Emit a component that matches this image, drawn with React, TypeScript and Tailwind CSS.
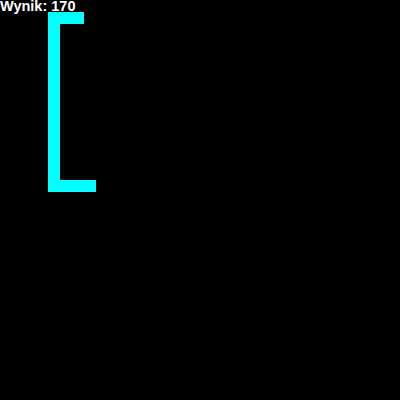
const CELL = 12

// snake segments in grid cells (x, y)
const snake: [number, number][] = [
  [6, 1], [5, 1], [4, 1],
  ...Array.from({ length: 13 }, (_, i) => [4, i + 2] as [number, number]),
  [4, 15], [5, 15], [6, 15], [7, 15],
]

export default function App() {
  return (
    <div className="relative w-[400px] h-[400px] bg-black overflow-hidden">
      {snake.map(([x, y], i) => (
        <div
          key={i}
          className="absolute w-[12px] h-[12px] bg-[#00ffff]"
          style={{ left: x * CELL, top: y * CELL }}
        />
      ))}
      <div className="absolute left-0 top-0 text-white font-bold text-[14.5px] leading-[13px] font-['Liberation_Sans',Arial,sans-serif]">
        Wynik: 170
      </div>
    </div>
  )
}
